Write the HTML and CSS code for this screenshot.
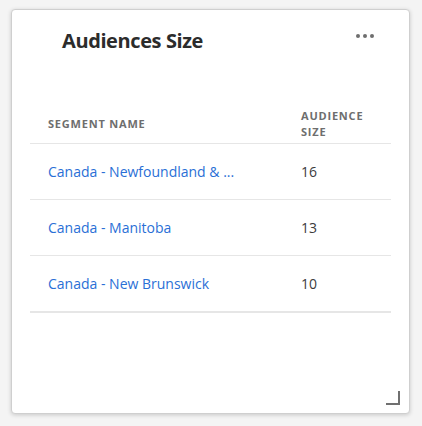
FILE: index.html
```html
<!DOCTYPE html>
<html>
<head>
<meta charset="utf-8">
<link rel="stylesheet" href="styles.css">
</head>
<body>
<div class="card">
  <div class="head">
    <h1 class="title">Audiences Size</h1>
    <span class="more"><i></i><i></i><i></i></span>
  </div>
  <div class="table">
    <div class="row hdr">
      <div class="c1">SEGMENT NAME</div>
      <div class="c2">AUDIENCE<br>SIZE</div>
    </div>
    <div class="row">
      <div class="c1 link">Canada - Newfoundland &amp; ...</div>
      <div class="c2 num">16</div>
    </div>
    <div class="row">
      <div class="c1 link">Canada - Manitoba</div>
      <div class="c2 num">13</div>
    </div>
    <div class="row last">
      <div class="c1 link">Canada - New Brunswick</div>
      <div class="c2 num">10</div>
    </div>
  </div>
  <span class="resize"></span>
</div>
</body>
</html>
```
FILE: styles.css
```css
html, body { margin: 0; padding: 0; }
body {
  background: #f4f4f4;
  font-family: "Open Sans", "Noto Sans", sans-serif;
  width: 422px;
  height: 426px;
  overflow: hidden;
}
.card {
  position: relative;
  box-sizing: border-box;
  margin: 9px 0 0 11px;
  width: 399px;
  height: 405px;
  background: #fff;
  border: 1px solid #cfcfcf;
  border-radius: 4px;
  box-shadow: 0 1px 4px rgba(0,0,0,0.18);
}
.head {
  display: flex;
  align-items: center;
  justify-content: space-between;
  height: 60px;
  padding: 0 35px 0 50px;
}
.title {
  margin: 0;
  font-size: 20px;
  font-weight: 700;
  color: #2c2c2c;
  letter-spacing: -0.4px;
  padding-top: 1px;
}
.more { display: flex; gap: 3px; margin-top: -8px; }
.more i { width: 4px; height: 4px; border-radius: 50%; background: #6e6e6e; display: block; }
.table {
  margin: 31px 18px 0 18px;
}
.row {
  display: flex;
  align-items: center;
  height: 55px;
  border-bottom: 1px solid #e6e6e6;
}
.row.hdr { height: 42px; align-items: flex-end; padding-bottom: 0; }
.row.last { border-bottom: 2px solid #e6e6e6; }
.c1 { width: 253px; padding-left: 18px; }
.c2 { flex: 1; }
.hdr .c1, .hdr .c2 {
  font-size: 11px;
  font-weight: 700;
  color: #6e6e6e;
  letter-spacing: 0.8px;
  line-height: 16px;
}
.hdr .c1 { padding-bottom: 11px; }
.hdr .c2 { padding-bottom: 3px; }
.link { color: #2a6fd6; font-size: 14px; }
.num { color: #3c3c3c; font-size: 14px; }
.resize {
  position: absolute;
  right: 9px;
  bottom: 8px;
  width: 14px;
  height: 14px;
  border-right: 2px solid #707070;
  border-bottom: 2px solid #707070;
  box-sizing: border-box;
}
```
